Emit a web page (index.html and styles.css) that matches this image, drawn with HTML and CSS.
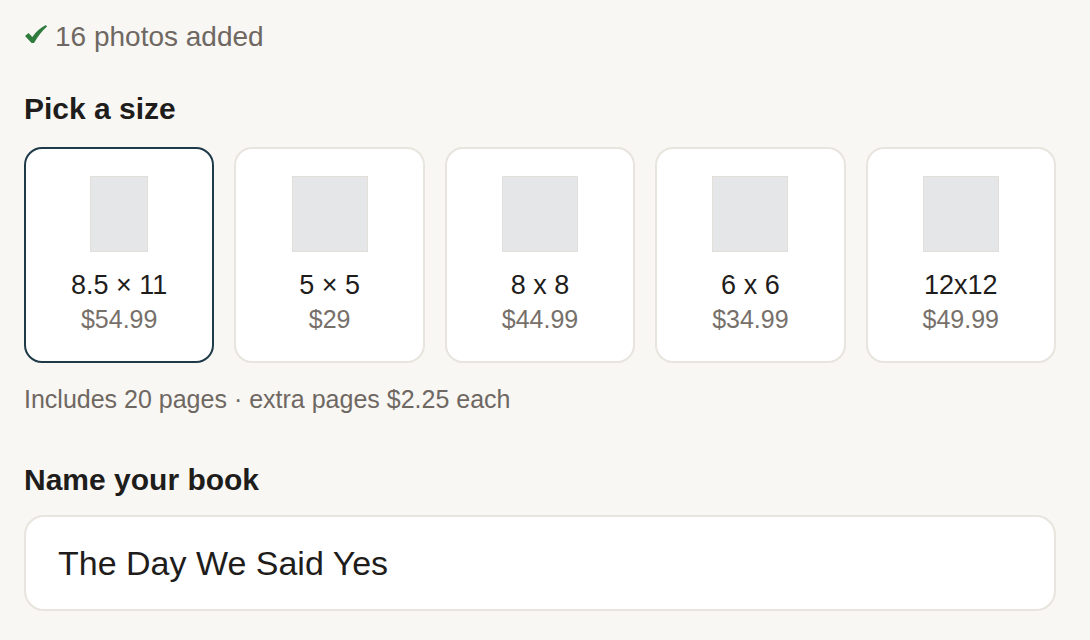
FILE: index.html
```html
<!DOCTYPE html>
<html lang="en">
<head>
<meta charset="utf-8">
<title>Photo book</title>
<link rel="stylesheet" href="styles.css">
</head>
<body>
<main class="page">
  <p class="status">
    <svg class="check" viewBox="0 0 22 18" width="22" height="18" aria-hidden="true">
      <path d="M0 11 L3.6 8.1 L7.3 11.9 Q12.8 4 20.9 0 L22 1.4 Q14.8 7.8 9 18 L6.6 18 Z" fill="#2f7a3d"/>
    </svg>
    <span>16 photos added</span>
  </p>

  <h2 class="heading">Pick a size</h2>
  <div class="sizes">
    <button class="size selected">
      <span class="thumb portrait"></span>
      <span class="label">8.5 × 11</span>
      <span class="price">$54.99</span>
    </button>
    <button class="size">
      <span class="thumb"></span>
      <span class="label">5 × 5</span>
      <span class="price">$29</span>
    </button>
    <button class="size">
      <span class="thumb"></span>
      <span class="label">8 x 8</span>
      <span class="price">$44.99</span>
    </button>
    <button class="size">
      <span class="thumb"></span>
      <span class="label">6 x 6</span>
      <span class="price">$34.99</span>
    </button>
    <button class="size">
      <span class="thumb"></span>
      <span class="label">12x12</span>
      <span class="price">$49.99</span>
    </button>
  </div>
  <p class="note">Includes 20 pages · extra pages $2.25 each</p>

  <h2 class="heading name-heading">Name your book</h2>
  <div class="input">The Day We Said Yes</div>
</main>
</body>
</html>
```

FILE: styles.css
```css
* { box-sizing: border-box; }
html, body { margin: 0; padding: 0; }
body {
  background: #f8f7f4;
  font-family: "Liberation Sans", Arial, sans-serif;
  color: #1f1d1b;
}
.page {
  padding: 20px 34px 0 24px;
}
.status {
  margin: 0;
  display: flex;
  align-items: flex-start;
  gap: 8px;
  font-size: 28px;
  line-height: 34px;
  color: #6f6862;
}
.check { flex: none; margin-left: 1px; margin-top: 5px; }
.heading {
  margin: 38px 0 0;
  font-size: 30px;
  line-height: 34px;
  font-weight: 700;
  color: #1f1d1b;
}
.sizes {
  margin-top: 21px;
  display: grid;
  grid-template-columns: repeat(5, 1fr);
  gap: 20px;
}
.size {
  height: 216px;
  background: #fff;
  border: 2px solid #e8e4de;
  border-radius: 18px;
  padding: 27px 0 0;
  display: flex;
  flex-direction: column;
  align-items: center;
  font-family: inherit;
  cursor: pointer;
}
.size.selected { border-color: #1f3a48; }
.thumb {
  width: 76px;
  height: 76px;
  background: #e4e6e7;
  border: 1px solid #e2dfda;
}
.thumb.portrait { width: 58px; }
.label {
  margin-top: 17px;
  font-size: 27px;
  line-height: 32px;
  color: #1f1d1b;
}
.price {
  margin-top: 3px;
  font-size: 25px;
  line-height: 30px;
  color: #77706a;
}
.note {
  margin: 21px 0 0;
  font-size: 25px;
  line-height: 30px;
  color: #6f6862;
}
.name-heading { margin-top: 49px; }
.input {
  margin-top: 18px;
  height: 96px;
  background: #fff;
  border: 2px solid #e8e4de;
  border-radius: 20px;
  padding: 0 32px;
  display: flex;
  align-items: center;
  font-size: 34px;
  color: #1f1d1b;
}
```
